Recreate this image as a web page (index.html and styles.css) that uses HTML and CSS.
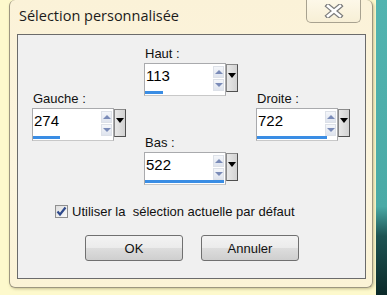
FILE: index.html
```html
<html>
  <head>
    <title>Sélection personnalisée</title>
    <link rel="stylesheet" href="styles.css">
  </head>
  <body>
  <div class="desk">
    <div class="window">
      <div class="titlebar">
        <span class="title">Sélection personnalisée</span>
        <button class="close">
          <svg width="20" height="14" viewBox="0 0 20 14">
            <path d="M4 2 L16 12 M16 2 L4 12" stroke="#7c7c7c" stroke-width="5" stroke-linecap="square"/>
            <path d="M4 2 L16 12 M16 2 L4 12" stroke="#ffffff" stroke-width="2.6" stroke-linecap="square"/>
          </svg>
        </button>
      </div>
      <div class="client">
        <div class="grid">
          <div class="side">
            <div class="field">
              <label>Gauche :</label>
              <div class="spin-row">
                <div class="spin">
                  <span class="val">274</span>
                  <div class="arrows"><span class="up"></span><span class="down"></span></div>
                  <div class="bar" style="width:27px"></div>
                </div>
                <div class="drop"></div>
              </div>
            </div>
          </div>
          <div class="middle">
            <div class="field">
              <label>Haut :</label>
              <div class="spin-row">
                <div class="spin">
                  <span class="val">113</span>
                  <div class="arrows"><span class="up"></span><span class="down"></span></div>
                  <div class="bar" style="width:18px"></div>
                </div>
                <div class="drop"></div>
              </div>
            </div>
            <div class="field">
              <label>Bas :</label>
              <div class="spin-row">
                <div class="spin">
                  <span class="val">522</span>
                  <div class="arrows"><span class="up"></span><span class="down"></span></div>
                  <div class="bar" style="width:79px"></div>
                </div>
                <div class="drop"></div>
              </div>
            </div>
          </div>
          <div class="side">
            <div class="field">
              <label>Droite :</label>
              <div class="spin-row">
                <div class="spin">
                  <span class="val">722</span>
                  <div class="arrows"><span class="up"></span><span class="down"></span></div>
                  <div class="bar" style="width:70px"></div>
                </div>
                <div class="drop"></div>
              </div>
            </div>
          </div>
        </div>
        <div class="check-row">
          <span class="checkbox">
            <svg width="11" height="11" viewBox="0 0 11 11">
              <path d="M1.5 5.5 L4 8.5 L9.5 1.5" fill="none" stroke="#2f4a8c" stroke-width="2.2"/>
            </svg>
          </span>
          <span>Utiliser la&nbsp; sélection actuelle par défaut</span>
        </div>
        <div class="buttons">
          <button class="btn">OK</button>
          <button class="btn">Annuler</button>
        </div>
      </div>
    </div>
    <div class="strip"></div>
  </div>
  </body>
</html>
```

FILE: styles.css
```css
body {
  margin: 0;
  background: #fdf9cc;
  font-family: "Liberation Sans", Arial, sans-serif;
  font-size: 13px;
  color: #111;
  overflow: hidden;
}
.desk {
  display: flex;
  height: 295px;
}
.window {
  margin-left: 9px;
  width: 364px;
  height: 288px;
  border: 1px solid #9c9680;
  border-top: none;
  border-radius: 6px;
  background: linear-gradient(#fbf2d8, #fcf5de 60%, #fbf3d6);
  box-shadow: 1px 1px 3px rgb(120 110 60 / 40%);
  box-sizing: border-box;
  padding: 0 6px 0 7px;
}
.strip {
  flex: 1;
  margin-left: 3px;
  background: linear-gradient(#52b4b0, #4aaaa6 70%, #1d5453 80%, #0b2a29);
}
.titlebar {
  height: 34px;
  display: flex;
  align-items: flex-start;
}
.title {
  font-family: "Open Sans", "Noto Sans", sans-serif;
  font-size: 14.5px;
  color: #1b1b1b;
  margin-top: 6px;
  margin-left: 2px;
  flex: 1;
}
.close {
  width: 55px;
  height: 23px;
  margin-right: 5px;
  border: 1px solid #a8a290;
  border-top: none;
  border-radius: 0 0 5px 5px;
  background: linear-gradient(#fdf8e8, #f7efd6);
  padding: 0;
  display: flex;
  align-items: center;
  justify-content: center;
}
.client {
  height: 245px;
  border: 1px solid #6b6b6b;
  background: #f0f0f0;
  box-sizing: border-box;
}
.grid {
  display: grid;
  grid-template-columns: 95px 95px 95px;
  column-gap: 17px;
  padding: 11px 0 0 14px;
}
.side {
  display: flex;
  align-items: center;
}
.middle {
  display: flex;
  flex-direction: column;
  gap: 39px;
}
.field label {
  display: block;
  height: 17px;
  line-height: 15px;
  margin-left: 1px;
}
.spin-row {
  display: flex;
  align-items: flex-start;
}
.spin {
  position: relative;
  width: 82px;
  height: 33px;
  border: 1px solid #a9aaad;
  border-bottom-color: #c8c8c8;
  background: #fff;
  box-sizing: border-box;
}
.val {
  display: block;
  font-size: 15px;
  line-height: 17px;
  margin: 3px 0 0 1px;
  color: #000;
}
.arrows {
  position: absolute;
  right: 1px;
  top: 2px;
  width: 11px;
  display: flex;
  flex-direction: column;
  gap: 1px;
}
.arrows span {
  height: 12px;
  background: linear-gradient(#f4f6fa, #dfe4ee);
  border: 1px solid #dde1e8;
  box-sizing: border-box;
  position: relative;
}
.arrows span::after {
  content: "";
  position: absolute;
  left: 1px;
  top: 3px;
  border-left: 4px solid transparent;
  border-right: 4px solid transparent;
}
.arrows .up::after {
  border-bottom: 4px solid #7a8bb8;
}
.arrows .down::after {
  border-top: 4px solid #7a8bb8;
}
.bar {
  position: absolute;
  left: 0;
  bottom: 1px;
  height: 3px;
  background: #3a8de4;
}
.drop {
  width: 12px;
  height: 28px;
  margin-top: 1px;
  border: 1px solid #505050;
  border-left-color: #8a8a8a;
  border-top-color: #8a8a8a;
  box-sizing: border-box;
  background: linear-gradient(90deg, #e8e8e8, #d2d2d2);
  position: relative;
}
.drop::after {
  content: "";
  position: absolute;
  left: 1px;
  top: 8px;
  border-left: 4.5px solid transparent;
  border-right: 4.5px solid transparent;
  border-top: 5px solid #000;
}
.check-row {
  display: flex;
  align-items: center;
  gap: 4px;
  margin: 19px 0 0 37px;
}
.checkbox {
  width: 13px;
  height: 13px;
  border: 1px solid #8f8f8f;
  background: linear-gradient(135deg, #dedede, #fafafa);
  box-sizing: border-box;
  display: flex;
  align-items: center;
  justify-content: center;
}
.buttons {
  display: flex;
  gap: 18px;
  margin: 16px 0 0 67px;
}
.btn {
  width: 98px;
  height: 26px;
  border: 1px solid #707070;
  border-radius: 3px;
  background: linear-gradient(#f3f3f3 0%, #ebebeb 50%, #dddddd 51%, #cfcfcf 100%);
  font-family: "Liberation Sans", Arial, sans-serif;
  font-size: 13px;
  color: #111;
  padding: 0;
}
```
